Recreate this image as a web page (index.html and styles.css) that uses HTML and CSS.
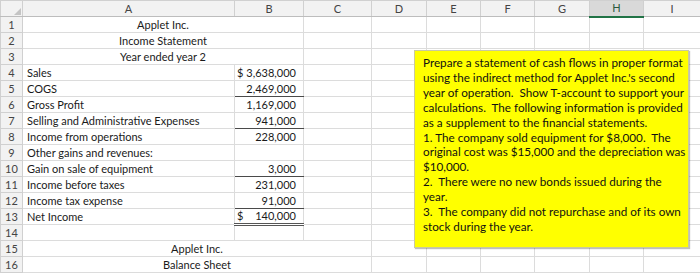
FILE: index.html
```html
<!DOCTYPE html>
<html>
<head>
<meta charset="utf-8">
<link rel="stylesheet" href="styles.css">
</head>
<body>
<div class="sheet">
<table class="grid">
<colgroup>
<col class="w-rh"><col class="w-a"><col class="w-b"><col class="w-c"><col class="w-d"><col class="w-e"><col class="w-f"><col class="w-g"><col class="w-h"><col class="w-i">
</colgroup>
<tr class="colhead"><th class="corner"><span class="tri"></span></th><th>A</th><th>B</th><th>C</th><th>D</th><th>E</th><th>F</th><th>G</th><th class="sel">H</th><th>I</th></tr>
<tr><th>1</th><td colspan="2" class="c">Applet Inc.</td><td></td><td></td><td></td><td></td><td></td><td></td><td></td></tr>
<tr><th>2</th><td colspan="2" class="c">Income Statement</td><td></td><td></td><td></td><td></td><td></td><td></td><td></td></tr>
<tr><th>3</th><td colspan="2" class="c">Year ended year 2</td><td></td><td></td><td></td><td></td><td></td><td></td><td></td></tr>
<tr><th>4</th><td>Sales</td><td class="num"><div class="acct"><span>$</span><span>3,638,000</span></div></td><td></td><td></td><td></td><td></td><td></td><td></td><td></td></tr>
<tr><th>5</th><td>COGS</td><td class="num ul"><div class="acct"><span></span><span>2,469,000</span></div></td><td></td><td></td><td></td><td></td><td></td><td></td><td></td></tr>
<tr><th>6</th><td>Gross Profit</td><td class="num"><div class="acct"><span></span><span>1,169,000</span></div></td><td></td><td></td><td></td><td></td><td></td><td></td><td></td></tr>
<tr><th>7</th><td>Selling and Administrative Expenses</td><td class="num ul"><div class="acct"><span></span><span>941,000</span></div></td><td></td><td></td><td></td><td></td><td></td><td></td><td></td></tr>
<tr><th>8</th><td>Income from operations</td><td class="num"><div class="acct"><span></span><span>228,000</span></div></td><td></td><td></td><td></td><td></td><td></td><td></td><td></td></tr>
<tr><th>9</th><td>Other gains and revenues:</td><td></td><td></td><td></td><td></td><td></td><td></td><td></td><td></td></tr>
<tr><th>10</th><td>Gain on sale of equipment</td><td class="num ul"><div class="acct"><span></span><span>3,000</span></div></td><td></td><td></td><td></td><td></td><td></td><td></td><td></td></tr>
<tr><th>11</th><td>Income before taxes</td><td class="num"><div class="acct"><span></span><span>231,000</span></div></td><td></td><td></td><td></td><td></td><td></td><td></td><td></td></tr>
<tr><th>12</th><td>Income tax expense</td><td class="num ul"><div class="acct"><span></span><span>91,000</span></div></td><td></td><td></td><td></td><td></td><td></td><td></td><td></td></tr>
<tr><th>13</th><td>Net Income</td><td class="num dbl"><div class="acct"><span>$</span><span>140,000</span></div></td><td></td><td></td><td></td><td></td><td></td><td></td><td></td></tr>
<tr><th>14</th><td></td><td></td><td></td><td></td><td></td><td></td><td></td><td></td><td></td></tr>
<tr><th>15</th><td colspan="3" class="c">Applet Inc.</td><td></td><td></td><td></td><td></td><td></td><td></td></tr>
<tr><th>16</th><td colspan="3" class="c">Balance Sheet</td><td></td><td></td><td></td><td></td><td></td><td></td></tr>
</table>
<div class="note">
<span class="ln">Prepare a statement of cash flows in proper format</span>
<span class="ln">using the indirect method for Applet Inc.'s second</span>
<span class="ln">year of operation.  Show T-account to support your</span>
<span class="ln">calculations.  The following information is provided</span>
<span class="ln">as a supplement to the financial statements.</span>
<span class="ln">1. The company sold equipment for $8,000.  The</span>
<span class="ln">original cost was $15,000 and the depreciation was</span>
<span class="ln">$10,000.</span>
<span class="ln">2.  There were no new bonds issued during the</span>
<span class="ln">year.</span>
<span class="ln">3.  The company did not repurchase and of its own</span>
<span class="ln">stock during the year.</span>
</div>
</div>
</body>
</html>
```
FILE: styles.css
```css
html, body {
  margin: 0;
  padding: 0;
  background: #ffffff;
}
body {
  width: 700px;
  height: 276px;
  overflow: hidden;
  font-family: Lato, "Liberation Sans", sans-serif;
  color: #1a1a1a;
}
.sheet {
  position: relative;
  width: 700px;
  height: 276px;
}
.grid {
  border-collapse: collapse;
  table-layout: fixed;
  width: 700px;
}
.w-rh { width: 22px; }
.w-a { width: 212px; }
.w-b { width: 69px; }
.w-c { width: 68px; }
.w-d { width: 55px; }
.w-e { width: 54px; }
.w-f { width: 54px; }
.w-g { width: 55px; }
.w-h { width: 54px; }
.w-i { width: 57px; }
.grid tr {
  height: 16px;
}
.grid td {
  border: 1px solid #dcdcdc;
  padding: 0 4px;
  font-size: 11px;
  line-height: 14px;
  white-space: nowrap;
  overflow: hidden;
  vertical-align: middle;
}
.grid td.c {
  text-align: center;
}
.grid td.num {
  padding: 0 2px;
}
.grid th {
  background: #f2f2f2;
  border: 1px solid #d0d0d0;
  font-weight: normal;
  font-size: 11px;
  color: #444444;
  padding: 0;
  text-align: center;
  line-height: 14px;
}
.colhead {
  height: 17px;
}
.colhead th {
  border-bottom: 1px solid #bdbdbd;
}
.colhead th.sel {
  background: #d9d9d9;
  color: #2a5a3e;
  border-bottom: 2px solid #217346;
}
.corner {
  position: relative;
}
.tri {
  position: absolute;
  right: 1px;
  bottom: 1px;
  width: 0;
  height: 0;
  border-left: 7px solid transparent;
  border-bottom: 7px solid #c4c4c4;
}
.acct {
  display: flex;
  justify-content: space-between;
  padding-right: 5px;
}
.grid td.ul {
  border-bottom: 1px solid #4a4a4a;
}
.grid td.dbl {
  border-bottom: 3px double #555555;
}
.note {
  position: absolute;
  left: 414px;
  top: 50px;
  width: 275px;
  height: 198px;
  box-sizing: border-box;
  background: #ffff00;
  border: 1px solid #c9c9a0;
  box-shadow: 1px 1px 1px rgba(0, 0, 0, 0.25);
  padding: 4px 2px 0 8px;
  font-size: 11.7px;
  line-height: 14.9px;
  color: #111111;
}
.ln {
  display: block;
  white-space: pre;
}
```
